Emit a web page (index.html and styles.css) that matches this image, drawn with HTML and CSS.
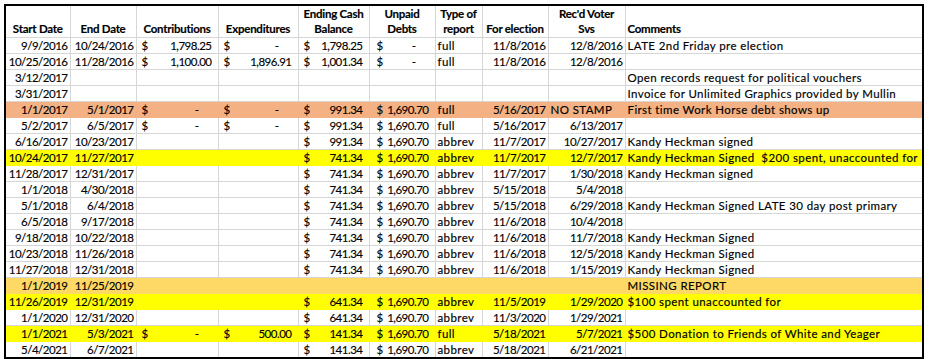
FILE: index.html
```html
<!DOCTYPE html>
<html lang="en">
<head>
<meta charset="utf-8">
<title>Campaign Finance Reports</title>
<link rel="stylesheet" href="styles.css">
</head>
<body>
<div class="sheet">
<table class="grid">
<colgroup>
<col class="c-start"><col class="c-end"><col class="c-contrib"><col class="c-exp"><col class="c-cash"><col class="c-debt"><col class="c-type"><col class="c-elec"><col class="c-svs"><col class="c-comm">
</colgroup>
<thead>
<tr>
<th>Start Date</th><th>End Date</th><th>Contributions</th><th>Expenditures</th><th>Ending Cash<br>Balance</th><th>Unpaid<br>Debts</th><th>Type of<br>report</th><th>For election</th><th>Rec'd Voter<br>Svs</th><th class="th-left">Comments</th>
</tr>
</thead>
<tbody>
<tr>
<td class="r">9/9/2016</td><td class="r">10/24/2016</td>
<td><div class="acc"><span>$</span><span>1,798.25</span></div></td>
<td><div class="acc"><span>$</span><span class="dash">-</span></div></td>
<td><div class="acc"><span>$</span><span>1,798.25</span></div></td>
<td><div class="acc debt"><span>$</span><span class="dash">-</span></div></td>
<td>full</td><td class="r">11/8/2016</td><td class="r">12/8/2016</td><td>LATE 2nd Friday pre election</td>
</tr>
<tr>
<td class="r">10/25/2016</td><td class="r">11/28/2016</td>
<td><div class="acc"><span>$</span><span>1,100.00</span></div></td>
<td><div class="acc"><span>$</span><span>1,896.91</span></div></td>
<td><div class="acc"><span>$</span><span>1,001.34</span></div></td>
<td><div class="acc debt"><span>$</span><span class="dash">-</span></div></td>
<td>full</td><td class="r">11/8/2016</td><td class="r">12/8/2016</td><td></td>
</tr>
<tr>
<td class="r">3/12/2017</td><td></td><td></td><td></td><td></td><td></td><td></td><td></td><td></td><td>Open records request for political vouchers</td>
</tr>
<tr>
<td class="r">3/31/2017</td><td></td><td></td><td></td><td></td><td></td><td></td><td></td><td></td><td>Invoice for Unlimited Graphics provided by Mullin</td>
</tr>
<tr class="hl-salmon">
<td class="r">1/1/2017</td><td class="r">5/1/2017</td>
<td><div class="acc"><span>$</span><span class="dash">-</span></div></td>
<td><div class="acc"><span>$</span><span class="dash">-</span></div></td>
<td><div class="acc"><span>$</span><span>991.34</span></div></td>
<td><div class="acc debt"><span>$</span><span>1,690.70</span></div></td>
<td>full</td><td class="r">5/16/2017</td><td>NO STAMP</td><td>First time Work Horse debt shows up</td>
</tr>
<tr>
<td class="r">5/2/2017</td><td class="r">6/5/2017</td>
<td><div class="acc"><span>$</span><span class="dash">-</span></div></td>
<td><div class="acc"><span>$</span><span class="dash">-</span></div></td>
<td><div class="acc"><span>$</span><span>991.34</span></div></td>
<td><div class="acc debt"><span>$</span><span>1,690.70</span></div></td>
<td>full</td><td class="r">5/16/2017</td><td class="r">6/13/2017</td><td></td>
</tr>
<tr>
<td class="r">6/16/2017</td><td class="r">10/23/2017</td><td></td><td></td>
<td><div class="acc"><span>$</span><span>991.34</span></div></td>
<td><div class="acc debt"><span>$</span><span>1,690.70</span></div></td>
<td>abbrev</td><td class="r">11/7/2017</td><td class="r">10/27/2017</td><td>Kandy Heckman signed</td>
</tr>
<tr class="hl-yellow">
<td class="r">10/24/2017</td><td class="r">11/27/2017</td><td></td><td></td>
<td><div class="acc"><span>$</span><span>741.34</span></div></td>
<td><div class="acc debt"><span>$</span><span>1,690.70</span></div></td>
<td>abbrev</td><td class="r">11/7/2017</td><td class="r">12/7/2017</td><td class="pre">Kandy Heckman Signed  $200 spent, unaccounted for</td>
</tr>
<tr>
<td class="r">11/28/2017</td><td class="r">12/31/2017</td><td></td><td></td>
<td><div class="acc"><span>$</span><span>741.34</span></div></td>
<td><div class="acc debt"><span>$</span><span>1,690.70</span></div></td>
<td>abbrev</td><td class="r">11/7/2017</td><td class="r">1/30/2018</td><td>Kandy Heckman signed</td>
</tr>
<tr>
<td class="r">1/1/2018</td><td class="r">4/30/2018</td><td></td><td></td>
<td><div class="acc"><span>$</span><span>741.34</span></div></td>
<td><div class="acc debt"><span>$</span><span>1,690.70</span></div></td>
<td>abbrev</td><td class="r">5/15/2018</td><td class="r">5/4/2018</td><td></td>
</tr>
<tr>
<td class="r">5/1/2018</td><td class="r">6/4/2018</td><td></td><td></td>
<td><div class="acc"><span>$</span><span>741.34</span></div></td>
<td><div class="acc debt"><span>$</span><span>1,690.70</span></div></td>
<td>abbrev</td><td class="r">5/15/2018</td><td class="r">6/29/2018</td><td>Kandy Heckman Signed LATE 30 day post primary</td>
</tr>
<tr>
<td class="r">6/5/2018</td><td class="r">9/17/2018</td><td></td><td></td>
<td><div class="acc"><span>$</span><span>741.34</span></div></td>
<td><div class="acc debt"><span>$</span><span>1,690.70</span></div></td>
<td>abbrev</td><td class="r">11/6/2018</td><td class="r">10/4/2018</td><td></td>
</tr>
<tr>
<td class="r">9/18/2018</td><td class="r">10/22/2018</td><td></td><td></td>
<td><div class="acc"><span>$</span><span>741.34</span></div></td>
<td><div class="acc debt"><span>$</span><span>1,690.70</span></div></td>
<td>abbrev</td><td class="r">11/6/2018</td><td class="r">11/7/2018</td><td>Kandy Heckman Signed</td>
</tr>
<tr>
<td class="r">10/23/2018</td><td class="r">11/26/2018</td><td></td><td></td>
<td><div class="acc"><span>$</span><span>741.34</span></div></td>
<td><div class="acc debt"><span>$</span><span>1,690.70</span></div></td>
<td>abbrev</td><td class="r">11/6/2018</td><td class="r">12/5/2018</td><td>Kandy Heckman Signed</td>
</tr>
<tr>
<td class="r">11/27/2018</td><td class="r">12/31/2018</td><td></td><td></td>
<td><div class="acc"><span>$</span><span>741.34</span></div></td>
<td><div class="acc debt"><span>$</span><span>1,690.70</span></div></td>
<td>abbrev</td><td class="r">11/6/2018</td><td class="r">1/15/2019</td><td>Kandy Heckman Signed</td>
</tr>
<tr class="hl-gold">
<td class="r">1/1/2019</td><td class="r">11/25/2019</td><td></td><td></td><td></td><td></td><td></td><td></td><td></td><td>MISSING REPORT</td>
</tr>
<tr class="hl-yellow">
<td class="r">11/26/2019</td><td class="r">12/31/2019</td><td></td><td></td>
<td><div class="acc"><span>$</span><span>641.34</span></div></td>
<td><div class="acc debt"><span>$</span><span>1,690.70</span></div></td>
<td>abbrev</td><td class="r">11/5/2019</td><td class="r">1/29/2020</td><td>$100 spent unaccounted for</td>
</tr>
<tr>
<td class="r">1/1/2020</td><td class="r">12/31/2020</td><td></td><td></td>
<td><div class="acc"><span>$</span><span>641.34</span></div></td>
<td><div class="acc debt"><span>$</span><span>1,690.70</span></div></td>
<td>abbrev</td><td class="r">11/3/2020</td><td class="r">1/29/2021</td><td></td>
</tr>
<tr class="hl-yellow">
<td class="r">1/1/2021</td><td class="r">5/3/2021</td>
<td><div class="acc"><span>$</span><span class="dash">-</span></div></td>
<td><div class="acc"><span>$</span><span>500.00</span></div></td>
<td><div class="acc"><span>$</span><span>141.34</span></div></td>
<td><div class="acc debt"><span>$</span><span>1,690.70</span></div></td>
<td>full</td><td class="r">5/18/2021</td><td class="r">5/7/2021</td><td>$500 Donation to Friends of White and Yeager</td>
</tr>
<tr>
<td class="r">5/4/2021</td><td class="r">6/7/2021</td><td></td><td></td>
<td><div class="acc"><span>$</span><span>141.34</span></div></td>
<td><div class="acc debt"><span>$</span><span>1,690.70</span></div></td>
<td>abbrev</td><td class="r">5/18/2021</td><td class="r">6/21/2021</td><td></td>
</tr>
</tbody>
</table>
</div>
</body>
</html>
```

FILE: styles.css
```css
html, body {
  margin: 0;
  padding: 0;
  background: #ffffff;
}

body {
  padding: 4px;
  font-family: Lato, "Liberation Sans", sans-serif;
  font-size: 11.5px;
  color: #000000;
}

.sheet {
  width: 916px;
  border: 2px solid #000000;
}

.grid {
  width: 916px;
  table-layout: fixed;
  border-collapse: collapse;
  border-style: hidden;
}

.c-start { width: 64px; }
.c-end { width: 66px; }
.c-contrib { width: 82px; }
.c-exp { width: 80px; }
.c-cash { width: 71px; }
.c-debt { width: 66px; }
.c-type { width: 47px; }
.c-elec { width: 66px; }
.c-svs { width: 77px; }
.c-comm { width: 297px; }

.grid th,
.grid td {
  border: 1px solid #d6d6d6;
  padding: 0 2px;
  white-space: nowrap;
  overflow: hidden;
  line-height: 15px;
  -webkit-text-stroke: 0.15px #000000;
}

.grid thead tr {
  height: 31px;
}

.grid th {
  font-weight: 700;
  text-align: center;
  vertical-align: bottom;
  padding-bottom: 1px;
  letter-spacing: -0.25px;
}

.grid th.th-left {
  text-align: left;
}

.grid tbody tr {
  height: 15.8px;
}

.grid td {
  text-align: left;
  vertical-align: middle;
  letter-spacing: 0.4px;
}

.grid td.r {
  text-align: right;
  padding-right: 2px;
  letter-spacing: -0.5px;
}

.grid td.pre {
  white-space: pre;
}

.acc {
  display: flex;
  justify-content: space-between;
  padding: 0 4px 0 3px;
  letter-spacing: -0.5px;
}

.acc.debt {
  padding-left: 5px;
}

.acc .dash {
  padding-right: 13px;
}

.hl-salmon td {
  background: #f4b183;
  border-color: #f4b183;
}

.hl-yellow td {
  background: #ffff00;
  border-color: #ffff00;
}

.hl-gold td {
  background: #ffd966;
  border-color: #ffd966;
}
```
